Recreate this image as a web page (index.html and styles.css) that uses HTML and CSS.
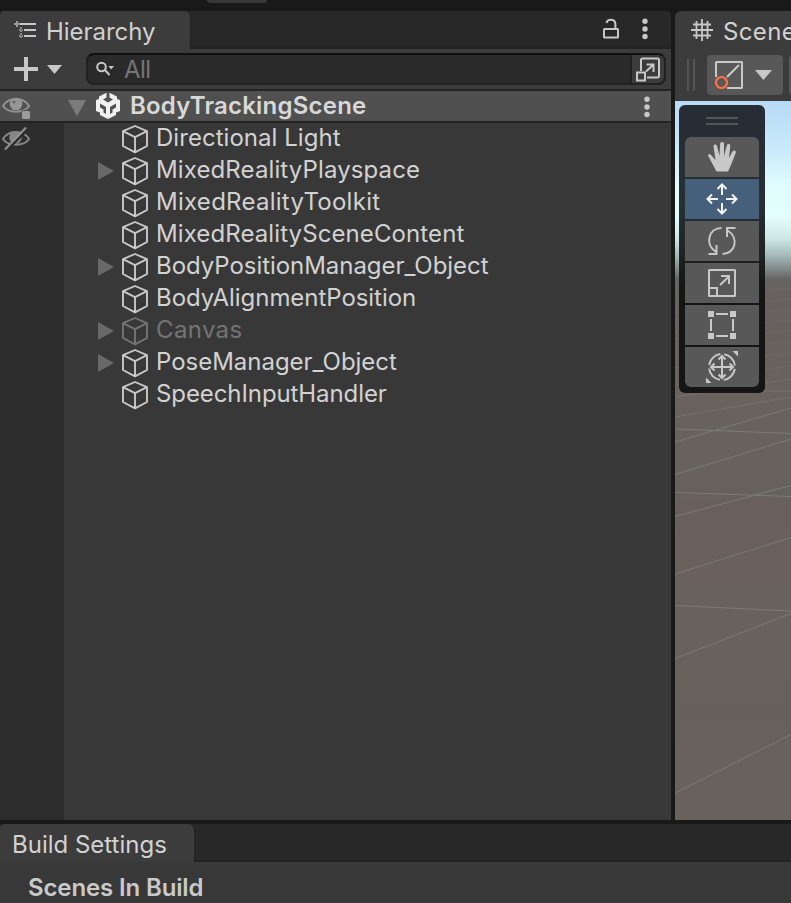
FILE: index.html
```html
<!DOCTYPE html>
<html lang="en">
<head>
<meta charset="utf-8">
<title>Hierarchy</title>
<link rel="stylesheet" href="styles.css">
</head>
<body>
<svg width="0" height="0" class="defs">
  <symbol id="cube" viewBox="0 0 28 30"><path d="M14 2 26 7.2V22L14 28.3 2 22V7.2ZM2 7.2 14 13.2 26 7.2M14 13.2V28.3" fill="none" stroke="currentColor" stroke-width="1.9" stroke-linejoin="round"/></symbol>
  <symbol id="arrow" viewBox="0 0 16 18"><path d="M0 0 16 9 0 18Z" fill="currentColor"/></symbol>
  <symbol id="dots" viewBox="0 0 6 22"><circle cx="3" cy="3.3" r="2.7"/><circle cx="3" cy="11" r="2.7"/><circle cx="3" cy="18.5" r="2.7"/></symbol>
</svg>
<div class="app">
  <div class="topbar"><span class="topbar-button"></span></div>
  <main class="main">
    <section class="hierarchy">
      <header class="tabs">
        <div class="tab tab-hierarchy">
          <svg width="24" height="20" viewBox="0 0 24 20" fill="none" stroke="#c8c8c8" stroke-width="2"><path d="M6 4H22M10 10H22M10 16H22"/><path d="M3 1V7M0 4H6" stroke-width="2" stroke="#999"/><path d="M5 10H9M5 16H9M7 7V18" stroke-width="2" stroke="#888" stroke-dasharray="2 1"/></svg>
          <span>Hierarchy</span>
        </div>
        <div class="tab-actions">
          <svg width="18" height="22" viewBox="0 0 18 22" fill="none" stroke="#c8c8c8" stroke-width="2"><rect x="2" y="11" width="14" height="8.5" rx=".5"/><path d="M4.500 5C5.200 1 13.400-.2 13.400 6.500V11"/></svg>
          <svg class="dots" width="6" height="22"><use href="#dots"/></svg>
        </div>
      </header>
      <div class="toolbar">
        <svg class="plus" width="24" height="24" viewBox="0 0 24 24"><path d="M10 0h4v10h10v4H14v10h-4V14H0v-4h10z" fill="#c8c8c8"/></svg>
        <svg class="caret" width="15" height="9" viewBox="0 0 15 9"><path d="M0 0H15L7.500 9Z" fill="#c8c8c8"/></svg>
        <div class="search">
          <svg width="20" height="16" viewBox="0 0 20 16" fill="none" stroke="#c8c8c8" stroke-width="2"><circle cx="5.500" cy="6" r="4.300"/><path d="M9 9 13.500 14"/><path d="M12.500 5H18L15.200 8.500Z" fill="#c8c8c8" stroke="none"/></svg>
          <span class="placeholder">All</span>
          <div class="search-open"><svg width="25" height="25" viewBox="0 0 25 25" fill="none" stroke="#c8c8c8" stroke-width="2"><path d="M5 14V3Q5 1.500 6.500 1.500H21.500Q23 1.500 23 3V19Q23 20.500 21.500 20.500H11"/><rect x="1" y="15.500" width="8" height="8"/><path d="M10 14.500 17.500 7.500M10.500 7.500H17.500V15"/></svg></div>
        </div>
      </div>
      <div class="scene-row">
        <svg class="eye" width="30" height="26" viewBox="0 0 30 26"><path d="M2 12C7 2.500 23 2.500 28 12C23 19.500 7 19.500 2 12Z" fill="none" stroke="#929292" stroke-width="2"/><circle cx="15" cy="10" r="6.300" fill="#969696"/><circle cx="13" cy="8" r="1.500" fill="#666"/><rect x="20.500" y="16.500" width="9" height="9" rx="2" fill="#9b9b9b" stroke="#505050"/></svg>
        <svg class="fold" width="18" height="16" viewBox="0 0 18 16"><path d="M0 0H18L9 16Z" fill="#7b7b7b"/></svg>
        <svg class="unity" width="26" height="28" viewBox="0 0 26 28"><path d="M11 1 4 4.500V7L1 8V19L5 20.500V23L13 27 21 23V20.500L25 19V8L22 7V4.500L15 1Z" fill="#f1f1f1"/><path d="M11.500 0H14.500V5.500L18 7.500 13 10.500 8 7.500 11.500 5.500ZM5 11.500 11 15V22L8.500 20.500V17.500L5 15.500ZM21 11.500 15 15V22L17.500 20.500V17.500L21 15.500Z" fill="#505050"/></svg>
        <span class="scene-name">BodyTrackingScene</span>
        <svg class="dots" width="6" height="22"><use href="#dots"/></svg>
      </div>
      <div class="tree">
        <div class="gutter"><svg width="30" height="26" viewBox="0 0 30 26"><path d="M2 14C7 4.500 23 4.500 28 14C23 21.500 7 21.500 2 14Z" fill="none" stroke="#888" stroke-width="2"/><circle cx="14.500" cy="12.500" r="6.300" fill="#858585"/><path d="M6 25 26 5" stroke="#2d2d2d" stroke-width="2.500"/><path d="M4 24.500 25 2.500" stroke="#929292" stroke-width="2"/></svg></div>
        <ul class="items">
          <li><i></i><svg class="cube"><use href="#cube"/></svg><span class="n1">Directional Light</span></li>
          <li><svg class="arrow"><use href="#arrow"/></svg><svg class="cube"><use href="#cube"/></svg><span class="n2">MixedRealityPlayspace</span></li>
          <li><i></i><svg class="cube"><use href="#cube"/></svg><span class="n3">MixedRealityToolkit</span></li>
          <li><i></i><svg class="cube"><use href="#cube"/></svg><span class="n4">MixedRealitySceneContent</span></li>
          <li><svg class="arrow"><use href="#arrow"/></svg><svg class="cube"><use href="#cube"/></svg><span class="n5">BodyPositionManager_Object</span></li>
          <li><i></i><svg class="cube"><use href="#cube"/></svg><span class="n6">BodyAlignmentPosition</span></li>
          <li class="disabled"><svg class="arrow"><use href="#arrow"/></svg><svg class="cube"><use href="#cube"/></svg><span class="n7">Canvas</span></li>
          <li><svg class="arrow"><use href="#arrow"/></svg><svg class="cube"><use href="#cube"/></svg><span class="n8">PoseManager_Object</span></li>
          <li><i></i><svg class="cube"><use href="#cube"/></svg><span class="n9">SpeechInputHandler</span></li>
        </ul>
      </div>
    </section>
    <section class="scene">
      <header class="scene-tab">
        <svg width="22" height="22" viewBox="0 0 22 22" stroke="#c8c8c8"><path d="M5.500 2V20M11 0V22M16.500 2V20M2 5.500H20M0 11H22M2 16.500H20" stroke-width="1.800"/></svg>
        <span>Scene</span>
      </header>
      <div class="scene-toolbar">
        <span class="grip"></span>
        <div class="mode">
          <svg width="30" height="30" viewBox="0 0 30 30" fill="none" stroke="#c8c8c8" stroke-width="2"><path d="M2 17V2.500Q2 2 2.500 2H27.500Q28 2 28 2.500V27.500Q28 28 27.500 28H13M13 17 25 5"/><circle cx="7.500" cy="22.500" r="5.500" stroke="#ff7043" stroke-width="2.200"/></svg>
          <svg width="17" height="10" viewBox="0 0 17 10"><path d="M0 0H17L8.500 10Z" fill="#c8c8c8"/></svg>
        </div>
        <span class="next"></span>
      </div>
      <div class="viewport">
        <svg class="grid" width="116" height="719" viewBox="0 0 116 719" fill="none" stroke="#7b7b77" stroke-width="1">
          <path d="M0 328 116 332.500M0 391.500 116 395.500M0 504.500 116 510M0 341 116 307M0 373.500 116 338M0 415.500 116 384.500M0 473 116 436.500M0 557.500 116 512.500M0 692 116 633.500"/>
          <path d="M0 316 116 296M0 296 116 278M86 290H116" opacity=".7"/>
          <path d="M0 284 116 265M0 267 116 252M0 255 116 240M0 243 116 230M0 231 116 219M0 219 116 209M0 206 116 198M0 194 116 187" opacity=".3"/>
        </svg>
        <div class="tools">
          <span class="tools-grip"></span>
          <div class="tool"><svg width="30" height="32" viewBox="0 0 30 32"><path d="M9.500 30.500 5.500 23 1 14.500Q2 12 4 14L8.500 19 6.500 5Q8 1.500 10 5L12.500 15 13.200 2Q15 0 17 2V15L20 4Q22 1.500 23.300 4.500L22 17 25.500 10.500Q27.500 8.500 29 11L24 24 21 30.500Z" fill="#c8c8c8"/></svg></div>
          <div class="tool active"><svg width="32" height="32" viewBox="0 0 32 32" fill="none" stroke="#f3f3f3" stroke-width="2"><path d="M16 12V1.500M11.500 6 16 1.500 20.500 6M16 20V30.500M11.500 26 16 30.500 20.500 26M12 16H1.500M6 11.500 1.500 16 6 20.500M20 16H30.500M26 11.500 30.500 16 26 20.500"/></svg></div>
          <div class="tool"><svg width="30" height="30" viewBox="0 0 30 30" fill="none" stroke="#c8c8c8" stroke-width="2"><path d="M14.500 2C2 2-3 18 9 26M1.500 28H9.500V19M15.500 28C28 28 33 12 20 4M28.500 2H20V11"/></svg></div>
          <div class="tool"><svg width="30" height="30" viewBox="0 0 30 30" fill="none" stroke="#c8c8c8" stroke-width="2"><rect x="2" y="2" width="26" height="26" rx=".5"/><path d="M2 20H10V28M13 17 22 8.500M14 8H22V16"/></svg></div>
          <div class="tool"><svg width="30" height="30" viewBox="0 0 30 30" fill="#c8c8c8"><path d="M1 1h6v6H1zM23 1h6v6h-6zM1 23h6v6H1zM23 23h6v6h-6zM9 3h12v2H9zM9 25h12v2H9zM3 9h2v12H3zM25 9h2v12h-2z"/></svg></div>
          <div class="tool"><svg width="34" height="34" viewBox="0 0 34 34" fill="none" stroke="#c8c8c8" stroke-width="2"><circle cx="17" cy="17" r="13" stroke-dasharray="16.400 4" stroke-dashoffset="-2"/><path d="M17 6V28M6 17H28M13.500 9.500 17 6 20.500 9.500M13.500 24.500 17 28 20.500 24.500M9.500 13.500 6 17 9.500 20.500M24.500 13.500 28 17 24.500 20.500"/><path d="M27.500 1H33V6.500ZM1 27.500V33H6.500Z" fill="#c8c8c8" stroke="none"/></svg></div>
        </div>
      </div>
    </section>
  </main>
  <section class="build">
    <header class="build-tabs"><div class="build-tab">Build Settings</div></header>
    <div class="build-body">Scenes In Build</div>
  </section>
</div>
</body>
</html>
```
FILE: styles.css
```css
* { box-sizing: border-box; }
body { margin: 0; background: #191919; color: #d2d2d2; font: 24px/32px Inter, "Liberation Sans", sans-serif; overflow: hidden; }
svg { display: block; flex: none; }
.defs { position: absolute; }
.app { display: flex; flex-direction: column; width: 791px; height: 903px; }
.topbar { height: 11px; flex: none; padding-left: 207px; }
.topbar-button { display: block; width: 60px; height: 3px; background: #383838; border-radius: 0 0 3px 3px; }
.main { display: flex; gap: 4px; height: 809px; flex: none; }
.hierarchy { width: 671px; display: flex; flex-direction: column; background: #383838; border-radius: 0 6px 0 0; overflow: hidden; }
.tabs { display: flex; justify-content: space-between; height: 38px; background: #282828; box-shadow: inset 0 -2px #222; }
.tab { display: flex; align-items: center; height: 38px; background: #3c3c3c; color: #d0d0d0; }
.tab-hierarchy { width: 191px; padding: 4px 0 0 14px; gap: 8px; border-right: 1px solid #222; border-radius: 5px 6px 0 0; letter-spacing: -.03px; }
.tab-hierarchy svg { margin-top: -5px; }
.tab-actions { display: flex; gap: 22px; padding: 7px 23px 0 0; }
.dots { fill: #c8c8c8; }
.toolbar { display: flex; align-items: center; height: 40px; background: #3c3c3c; padding-left: 14px; }
.caret { margin-left: 9px; }
.search { display: flex; align-items: center; width: 580px; height: 32px; margin-left: 24px; padding-left: 8px; background: #2a2a2a; border: 2px solid #212121; border-top-color: #0f0f0f; border-radius: 8px; overflow: hidden; }
.placeholder { color: #757575; margin-left: 8px; letter-spacing: -.6px; padding-top: 1px; }
.search-open { display: flex; align-items: center; justify-content: center; width: 34px; height: 30px; margin-left: auto; border-left: 2px solid #212121; background: #3c3c3c; }
.scene-row { display: flex; align-items: center; height: 34px; flex: none; background: #505050; border: solid #242424; border-width: 2px 0; color: #d8d8d8; }
.eye { margin: 2px 0 0 1px; }
.fold { margin: 3px 0 0 37px; }
.unity { margin-left: 9px; }
.scene-name { font-weight: 600; margin: -1px 0 0 9px; letter-spacing: .22px; }
.scene-row .dots { margin: 2px 21px 0 auto; }
.tree { display: flex; flex: 1; }
.gutter { width: 64px; background: #2d2d2d; padding: 2px 0 0 1px; }
.items { list-style: none; margin: -1px 0 0; padding: 0 0 0 34px; }
.items li { display: flex; align-items: center; height: 32px; }
.items i { width: 16px; }
.arrow { width: 16px; height: 18px; color: #686868; margin-top: 2px; }
.cube { width: 28px; height: 30px; color: #c9c9c9; margin: 2px 0 0 7px; }
.items span { margin-left: 7px; white-space: nowrap; }
.items .n1 { letter-spacing: .04px; }
.items .n2 { letter-spacing: .12px; }
.items .n3 { letter-spacing: .27px; }
.items .n4 { letter-spacing: .1px; }
.items .n5, .items .n6 { letter-spacing: -.05px; }
.items .n7 { letter-spacing: .35px; }
.items .n8 { letter-spacing: -.02px; }
.items .n9 { letter-spacing: -.09px; }
.disabled, .disabled .cube { color: #747474; }
.scene { flex: 1; min-width: 0; display: flex; flex-direction: column; background: #3c3c3c; border-radius: 6px 0 0 0; overflow: hidden; }
.scene-tab { display: flex; height: 38px; gap: 10px; align-items: center; padding: 4px 0 0 16px; letter-spacing: .35px; }
.scene-tab svg { margin-top: -4px; }
.scene-toolbar { display: flex; align-items: center; height: 52px; padding: 0 0 0 12px; }
.grip { width: 8px; height: 32px; border: solid #555; border-width: 0 2px; flex: none; }
.mode { display: flex; align-items: center; width: 76px; height: 40px; margin-left: 12px; padding-left: 7px; gap: 11px; border-radius: 4px; background: #585858; flex: none; }
.next { width: 10px; height: 40px; margin-left: 6px; background: #585858; border-radius: 4px 0 0 4px; flex: none; }
.viewport { position: relative; flex: 1; padding: 4px; background: linear-gradient(#b7d9f5 0, #c8eafa 48px, #e0fcfc 85px, #e3fffb 115px, #cce6e4 138px, #9eb1b0 157px, #666464 178px, #67615f 195px, #69625d 300px, #66625b 390px, #69605e 400px, #69615c 490px, #69615b 570px, #65615a 610px, #69615c 660px, #69615c 719px); }
.grid { position: absolute; left: 0; top: 0; }
.tools { position: relative; display: flex; flex-direction: column; gap: 2px; width: 86px; height: 288px; padding: 12px 6px 6px; border-radius: 6px; background: linear-gradient(#262c33, #262f34 100px, #202323 150px, #151515 180px); }
.tools-grip { width: 32px; height: 8px; margin: 0 auto 10px; border: solid #555; border-width: 2px 0; }
.tool { display: flex; align-items: center; justify-content: center; height: 40px; background: #585858; }
.tool:nth-child(2) { border-radius: 6px 6px 0 0; }
.tool:last-child { border-radius: 0 0 6px 6px; }
.active { background: #46607c; }
.build { margin-top: 4px; height: 79px; background: #383838; }
.build-tabs { height: 38px; background: #282828; box-shadow: inset 0 -2px #222; }
.build-tab { width: 195px; height: 38px; padding: 5px 0 0 12px; background: #3c3c3c; border-right: 1px solid #222; border-radius: 5px 6px 0 0; }
.build-body { padding: 10px 0 0 28px; font-weight: 600; color: #c9c9c9; letter-spacing: -.13px; }
```
